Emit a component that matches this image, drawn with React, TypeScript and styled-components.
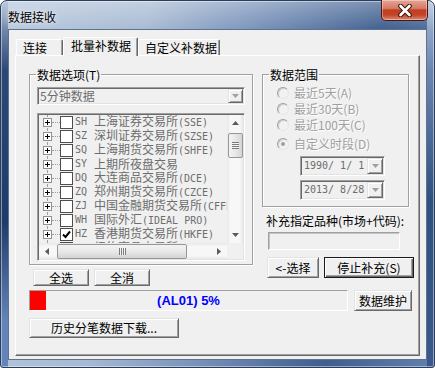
import React from 'react';
import styled, { createGlobalStyle, css } from 'styled-components';

const UI_FONT = `"Noto Sans CJK SC", "Noto Sans", sans-serif`;
const MONO_FONT = `"DejaVu Sans Mono", "Noto Sans CJK SC", monospace`;

interface Market {
  code: string;
  name: string;
  suffix?: string;
  checked?: boolean;
}

const markets: Market[] = [
  { code: 'SH', name: '上海证券交易所', suffix: '(SSE)' },
  { code: 'SZ', name: '深圳证券交易所', suffix: '(SZSE)' },
  { code: 'SQ', name: '上海期货交易所', suffix: '(SHFE)' },
  { code: 'SY', name: '上期所夜盘交易' },
  { code: 'DQ', name: '大连商品交易所', suffix: '(DCE)' },
  { code: 'ZQ', name: '郑州期货交易所', suffix: '(CZCE)' },
  { code: 'ZJ', name: '中国金融期货交易所', suffix: '(CFFEX)' },
  { code: 'WH', name: '国际外汇', suffix: '(IDEAL PRO)' },
  { code: 'HZ', name: '香港期货交易所', suffix: '(HKFE)', checked: true },
  { code: 'NY', name: '纽约商品交易所', suffix: '(NYMEX)' },
];

const ranges = [
  { label: '最近5天', key: 'A' },
  { label: '最近30天', key: 'B' },
  { label: '最近100天', key: 'C' },
  { label: '自定义时段', key: 'D', checked: true },
];

const progress = 5;

const GlobalStyle = createGlobalStyle`
  html, body { margin: 0; padding: 0; }
  body { font-family: ${UI_FONT}; font-size: 12px; background: #fff; }
  * { box-sizing: border-box; }
`;

const sunken = css`
  border: 1px solid;
  border-color: #a0a0a0 #fff #fff #a0a0a0;
  box-shadow: inset 1px 1px 0 #696969, inset -1px -1px 0 #e3e3e3;
`;

const raised = css`
  border: 1px solid;
  border-color: #e3e3e3 #696969 #696969 #e3e3e3;
  box-shadow: inset 1px 1px 0 #fff, inset -1px -1px 0 #a0a0a0;
  background: #f0f0f0;
`;

const Window = styled.div`
  position: relative;
  width: 435px;
  height: 368px;
  display: flex;
  flex-direction: column;
  padding: 0 7px 7px;
  border: 1px solid #2b3d5a;
  border-radius: 7px 7px 3px 3px;
  background:
    linear-gradient(180deg, rgba(255, 255, 255, 0.3), rgba(255, 255, 255, 0) 30px),
    linear-gradient(180deg, #9fb3cf 0, #2a4775 70px, #1f3b69 220px, #6284ba 320px) left top / 7px 100% no-repeat,
    linear-gradient(180deg, #a9bbd3 0, #6a86b0 70px, #30507f 200px, #3b5a8b 368px) right top / 7px 100% no-repeat,
    linear-gradient(100deg, #b9c9dd 0%, #a7bad3 30%, #7892b9 52%, #3f5e8e 78%, #6281ae 100%);
  box-shadow: inset 0 0 0 1px rgba(255, 255, 255, 0.45);
`;

const TitleBar = styled.div`
  height: 28px;
  display: flex;
  align-items: center;
`;

const Title = styled.span`
  margin-top: 4px;
  font-size: 12px;
  line-height: 16px;
  color: #000;
  text-shadow: 0 0 6px rgba(255, 255, 255, 0.9), 0 0 2px rgba(255, 255, 255, 0.7);
`;

const CloseButton = styled.div`
  position: absolute;
  top: -1px;
  right: 6px;
  width: 47px;
  height: 21px;
  display: flex;
  align-items: center;
  justify-content: center;
  border: 1px solid #4a1910;
  border-top: none;
  border-radius: 0 0 5px 5px;
  background: linear-gradient(180deg, #e6a596 0%, #d57b65 42%, #c23d20 50%, #c44428 75%, #de8a6f 100%);
  box-shadow: inset 0 0 0 1px rgba(255, 255, 255, 0.35);
`;

const Client = styled.div`
  flex: 1;
  display: flex;
  flex-direction: column;
  padding: 7px 6px 3px;
  background: #f0f0f0;
  border: 1px solid #5f7290;
`;

const TabStrip = styled.div`
  display: flex;
  align-items: flex-end;
  height: 18px;
  padding-left: 1px;
`;

const Tab = styled.div<{ $w: number; $active?: boolean }>`
  width: ${p => p.$w}px;
  height: 16px;
  padding-left: 6px;
  display: flex;
  align-items: center;
  font-size: 12px;
  line-height: 14px;
  color: #000;
  background: #f0f0f0;
  border: 1px solid;
  border-bottom: none;
  border-color: #fff #696969 transparent #fff;
  box-shadow: inset -1px 0 0 #a0a0a0;
  border-radius: 2px 2px 0 0;
  ${p =>
    p.$active &&
    css`
      position: relative;
      z-index: 1;
      height: 19px;
      margin-bottom: -1px;
      padding: 0 0 3px 7px;
    `}
`;

const Panel = styled.div`
  flex: 1;
  display: flex;
  flex-direction: column;
  padding: 12px 6px 0 13px;
  border: 1px solid;
  border-color: #fff #696969 #696969 #fff;
  box-shadow: inset -1px -1px 0 #a0a0a0;
`;

const TopRow = styled.div`
  display: flex;
  align-items: flex-start;
  gap: 9px;
`;

const Column = styled.div<{ $w: number }>`
  width: ${p => p.$w}px;
  display: flex;
  flex-direction: column;
`;

const GroupBox = styled.fieldset<{ $w: number; $bottom: number }>`
  width: ${p => p.$w}px;
  min-width: 0;
  margin: 0;
  padding: 0 7px ${p => p.$bottom}px;
  display: flex;
  flex-direction: column;
  border: 1px solid #a0a0a0;
  box-shadow: 1px 1px 0 #fff, inset 1px 1px 0 #fff;
`;

const Legend = styled.legend`
  margin-left: -1px;
  padding: 0 1px;
  font-size: 12px;
  line-height: 13px;
  color: #000;
`;

const Combo = styled.div`
  ${sunken};
  margin-top: 6px;
  height: 18px;
  display: flex;
  align-items: center;
  justify-content: space-between;
  padding: 1px;
  background: #f0f0f0;
`;

const ComboText = styled.span`
  padding-left: 1px;
  font-size: 12px;
  line-height: 14px;
  color: #6d6d6d;
`;

const DropButton = styled.div<{ $w: number }>`
  ${raised};
  width: ${p => p.$w}px;
  height: 100%;
  display: flex;
  align-items: center;
  justify-content: center;
`;

const TreeBox = styled.div`
  ${sunken};
  margin-top: 8px;
  height: 148px;
  padding: 1px;
  display: grid;
  grid-template-columns: 1fr 16px;
  grid-template-rows: 1fr 16px;
  background: #f0f0f0;
`;

const TreeViewport = styled.div`
  overflow: hidden;
`;

const TreeRow = styled.div`
  position: relative;
  height: 14px;
  display: flex;
  align-items: center;
  padding-left: 4px;
  white-space: nowrap;
  color: #6d6d6d;

  &::before {
    content: '';
    position: absolute;
    left: 8px;
    top: 0;
    bottom: 0;
    border-left: 1px dotted #a0a0a0;
  }

  & > svg {
    position: relative;
    flex: none;
  }
`;

const Connector = styled.span`
  width: 8px;
  height: 0;
  flex: none;
  border-top: 1px dotted #a0a0a0;
`;

const CheckBox = styled.span`
  width: 13px;
  height: 13px;
  flex: none;
  display: flex;
  align-items: center;
  justify-content: center;
  border: 1px solid #4d4d4d;
  background: #fff;
`;

const Code = styled.span`
  width: 19px;
  margin-left: 2px;
  flex: none;
  font-family: ${MONO_FONT};
  font-size: 10px;
  line-height: 12px;
`;

const Name = styled.span`
  font-size: 12px;
  line-height: 12px;
`;

const Mono = styled.span`
  font-family: ${MONO_FONT};
  font-size: 10px;
`;

const ScrollTrack = styled.div<{ $vertical?: boolean }>`
  display: flex;
  flex-direction: ${p => (p.$vertical ? 'column' : 'row')};
  background: ${p =>
    p.$vertical
      ? 'linear-gradient(90deg, #e7e7e7, #f7f7f7 20%, #f7f7f7 80%, #e7e7e7)'
      : 'linear-gradient(180deg, #e7e7e7, #f7f7f7 20%, #f7f7f7 80%, #e7e7e7)'};
`;

const ScrollArrow = styled.div`
  width: 16px;
  height: 16px;
  flex: none;
  display: flex;
  align-items: center;
  justify-content: center;
`;

const Thumb = styled.div<{ $vertical?: boolean; $size: number }>`
  flex: none;
  display: flex;
  align-items: center;
  justify-content: center;
  border: 1px solid #979797;
  border-radius: 2px;
  ${p =>
    p.$vertical
      ? css`
          height: ${p.$size}px;
          margin: 2px 0 0 1px;
          width: 15px;
          background: linear-gradient(90deg, #f3f3f3, #e8e8e8 50%, #d4d4d4);
        `
      : css`
          width: ${p.$size}px;
          margin: 1px 0 0 2px;
          height: 15px;
          background: linear-gradient(180deg, #f3f3f3, #e8e8e8 50%, #d4d4d4);
        `}
`;

const Grip = styled.span<{ $vertical?: boolean }>`
  width: 7px;
  height: 7px;
  background: ${p =>
    p.$vertical
      ? 'repeating-linear-gradient(180deg, #7c7c7c 0 1px, #f4f4f4 1px 2px)'
      : 'repeating-linear-gradient(90deg, #7c7c7c 0 1px, #f4f4f4 1px 2px)'};
`;

const Spacer = styled.div`
  flex: 1;
`;

const Corner = styled.div`
  background: #f0f0f0;
`;

const ButtonRow = styled.div<{ $top: number; $left: number; $gap: number }>`
  display: flex;
  gap: ${p => p.$gap}px;
  margin: ${p => p.$top}px 0 0 ${p => p.$left}px;
`;

const Button = styled.div<{ $w: number; $h: number; $default?: boolean }>`
  ${raised};
  width: ${p => p.$w}px;
  height: ${p => p.$h}px;
  flex: none;
  display: flex;
  align-items: center;
  justify-content: center;
  font-size: 12px;
  line-height: 14px;
  color: #000;
  ${p =>
    p.$default &&
    css`
      border-color: #1a1a1a;
      box-shadow: inset 1px 1px 0 #fff, inset -1px -1px 0 #696969, inset -2px -2px 0 #a0a0a0;
    `}
`;

const RadioGap = styled.div`
  height: 4px;
`;

const RadioRow = styled.div<{ $top?: number }>`
  height: 16px;
  margin-top: ${p => p.$top ?? 0}px;
  padding-left: 7px;
  display: flex;
  align-items: center;
  gap: 5px;
`;

const RadioDot = styled.span<{ $checked?: boolean }>`
  width: 12px;
  height: 12px;
  flex: none;
  display: flex;
  align-items: center;
  justify-content: center;
  border-radius: 50%;
  border: 1px solid;
  border-color: #a0a0a0 #e6e6e6 #e6e6e6 #a0a0a0;
  background: #f2f2f2;
  box-shadow: inset 1px 1px 0 #d0d0d0;

  &::after {
    content: '';
    width: 4px;
    height: 4px;
    border-radius: 50%;
    background: ${p => (p.$checked ? '#a0a0a0' : 'transparent')};
  }
`;

const DisabledText = styled.span`
  font-size: 12px;
  line-height: 14px;
  color: #a0a0a0;
  text-shadow: 1px 1px 0 #fff;
`;

const DateBox = styled.div<{ $top: number }>`
  ${sunken};
  width: 85px;
  height: 20px;
  margin: ${p => p.$top}px 0 0 30px;
  padding: 1px;
  display: flex;
  align-items: center;
  justify-content: space-between;
  background: #f0f0f0;
`;

const DateText = styled.span`
  padding-left: 2px;
  font-family: ${MONO_FONT};
  font-size: 10px;
  line-height: 14px;
  white-space: pre;
  color: #6d6d6d;
`;

const FieldLabel = styled.div`
  margin-top: 7px;
  padding-left: 4px;
  font-size: 12px;
  line-height: 14px;
  color: #000;
  white-space: nowrap;
`;

const TextInput = styled.div`
  width: 132px;
  height: 18px;
  margin: 4px 0 0 6px;
  border: 1px solid;
  border-color: #a0a0a0 #fff #fff #a0a0a0;
  box-shadow: inset 1px 1px 0 #c4c4c4;
  background: #f0f0f0;
`;

const ProgressRow = styled.div`
  display: flex;
  align-items: flex-start;
  gap: 6px;
  margin-top: 4px;
`;

const Progress = styled.div`
  width: 319px;
  height: 21px;
  display: grid;
  border: 1px solid;
  border-color: #a0a0a0 #fff #fff #a0a0a0;
  background: #f0f0f0;
`;

const ProgressFill = styled.div`
  grid-area: 1 / 1;
  height: 100%;
  background: #ff0000;
`;

const ProgressText = styled.div`
  grid-area: 1 / 1;
  align-self: center;
  text-align: center;
  font-family: "Liberation Sans", Arial, sans-serif;
  font-weight: bold;
  font-size: 13px;
  line-height: 15px;
  color: #0000ff;
`;

const Arrow = ({ dir, color = '#5b5b5b' }: { dir: 'up' | 'down' | 'left' | 'right'; color?: string }) => {
  const points = {
    up: '0,4 7,4 3.5,0',
    down: '0,0 7,0 3.5,4',
    left: '4,0 4,7 0,3.5',
    right: '0,0 0,7 4,3.5',
  }[dir];
  const vertical = dir === 'up' || dir === 'down';
  return (
    <svg width={vertical ? 7 : 4} height={vertical ? 4 : 7} viewBox={vertical ? '0 0 7 4' : '0 0 4 7'}>
      <polygon points={points} fill={color} />
    </svg>
  );
};

const CloseIcon = () => (
  <svg width="16" height="13" viewBox="0 0 16 13">
    <path d="M3.5 2 L12.5 11 M12.5 2 L3.5 11" stroke="#3a1712" strokeWidth="4.6" strokeLinecap="round" />
    <path d="M3.5 2 L12.5 11 M12.5 2 L3.5 11" stroke="#fff" strokeWidth="2.6" strokeLinecap="round" />
  </svg>
);

const Expander = () => (
  <svg width="9" height="9" viewBox="0 0 9 9">
    <rect x="0.5" y="0.5" width="8" height="8" fill="#fff" stroke="#919191" />
    <path d="M2 4.5 H7 M4.5 2 V7" stroke="#000" />
  </svg>
);

const Tick = () => (
  <svg width="9" height="9" viewBox="0 0 9 9">
    <polyline points="1,4.5 3.5,7 8,1.5" fill="none" stroke="#000" strokeWidth="2" />
  </svg>
);

export default function App() {
  const fillWidth = Math.round((317 * progress) / 100);

  return (
    <>
      <GlobalStyle />
      <Window>
        <TitleBar>
          <Title>数据接收</Title>
        </TitleBar>
        <CloseButton>
          <CloseIcon />
        </CloseButton>
        <Client>
          <TabStrip>
            <Tab $w={47}>连接</Tab>
            <Tab $w={75} $active>
              批量补数据
            </Tab>
            <Tab $w={82}>自定义补数据</Tab>
          </TabStrip>
          <Panel>
            <TopRow>
              <Column $w={224}>
                <GroupBox $w={224} $bottom={3}>
                  <Legend>数据选项(T)</Legend>
                  <Combo>
                    <ComboText>5分钟数据</ComboText>
                    <DropButton $w={15}>
                      <Arrow dir="down" color="#a0a0a0" />
                    </DropButton>
                  </Combo>
                  <TreeBox>
                    <TreeViewport>
                      {markets.map(m => (
                        <TreeRow key={m.code}>
                          <Expander />
                          <Connector />
                          <CheckBox>{m.checked && <Tick />}</CheckBox>
                          <Code>{m.code}</Code>
                          <Name>
                            {m.name}
                            {m.suffix && <Mono>{m.suffix}</Mono>}
                          </Name>
                        </TreeRow>
                      ))}
                    </TreeViewport>
                    <ScrollTrack $vertical>
                      <ScrollArrow>
                        <Arrow dir="up" />
                      </ScrollArrow>
                      <Thumb $vertical $size={25}>
                        <Grip $vertical />
                      </Thumb>
                      <Spacer />
                      <ScrollArrow>
                        <Arrow dir="down" />
                      </ScrollArrow>
                    </ScrollTrack>
                    <ScrollTrack>
                      <ScrollArrow>
                        <Arrow dir="left" />
                      </ScrollArrow>
                      <Thumb $size={130}>
                        <Grip />
                      </Thumb>
                      <Spacer />
                      <ScrollArrow>
                        <Arrow dir="right" />
                      </ScrollArrow>
                    </ScrollTrack>
                    <Corner />
                  </TreeBox>
                </GroupBox>
                <ButtonRow $top={4} $left={4} $gap={5}>
                  <Button $w={56} $h={17}>全选</Button>
                  <Button $w={56} $h={17}>全消</Button>
                </ButtonRow>
              </Column>

              <Column $w={150}>
                <GroupBox $w={147} $bottom={6}>
                  <Legend>数据范围</Legend>
                  <RadioGap />
                  {ranges.map((r, i) => (
                    <RadioRow key={r.key} $top={i === 3 ? 3 : 0}>
                      <RadioDot $checked={r.checked} />
                      <DisabledText>
                        {r.label}({r.key})
                      </DisabledText>
                    </RadioRow>
                  ))}
                  <DateBox $top={4}>
                    <DateText>1990/ 1/ 1</DateText>
                    <DropButton $w={16}>
                      <Arrow dir="down" color="#a0a0a0" />
                    </DropButton>
                  </DateBox>
                  <DateBox $top={4}>
                    <DateText>2013/ 8/28</DateText>
                    <DropButton $w={16}>
                      <Arrow dir="down" color="#a0a0a0" />
                    </DropButton>
                  </DateBox>
                </GroupBox>
                <FieldLabel>补充指定品种(市场+代码):</FieldLabel>
                <TextInput />
                <ButtonRow $top={7} $left={5} $gap={5}>
                  <Button $w={52} $h={21}>&lt;-选择</Button>
                  <Button $w={90} $h={21} $default>
                    停止补充(S)
                  </Button>
                </ButtonRow>
              </Column>
            </TopRow>

            <ProgressRow>
              <Progress>
                <ProgressFill style={{ width: fillWidth }} />
                <ProgressText>(AL01) {progress}%</ProgressText>
              </Progress>
              <Button $w={58} $h={21}>数据维护</Button>
            </ProgressRow>

            <ButtonRow $top={7} $left={0} $gap={0}>
              <Button $w={150} $h={20}>历史分笔数据下载...</Button>
            </ButtonRow>
          </Panel>
        </Client>
      </Window>
    </>
  );
}
